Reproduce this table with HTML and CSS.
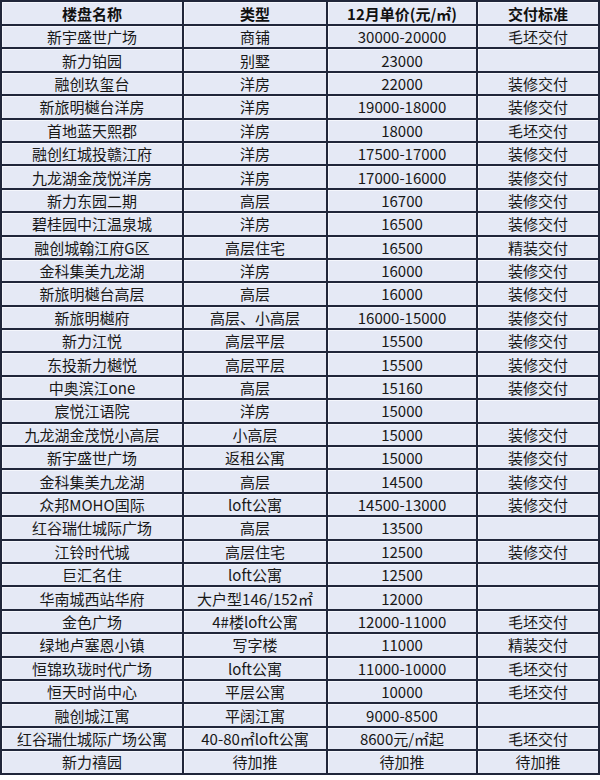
FILE: index.html
```html
<!DOCTYPE html>
<html lang="zh">
<head>
<meta charset="utf-8">
<link rel="stylesheet" href="styles.css">
</head>
<body>
<table class="price-table">
<colgroup>
<col class="c-name"><col class="c-type"><col class="c-price"><col class="c-std">
</colgroup>
<thead>
<tr><th>楼盘名称</th><th>类型</th><th>12月单价(元/㎡)</th><th>交付标准</th></tr>
</thead>
<tbody>
<tr><td>新宇盛世广场</td><td>商铺</td><td>30000-20000</td><td>毛坯交付</td></tr>
<tr><td>新力铂园</td><td>别墅</td><td>23000</td><td></td></tr>
<tr><td>融创玖玺台</td><td>洋房</td><td>22000</td><td>装修交付</td></tr>
<tr><td>新旅明樾台洋房</td><td>洋房</td><td>19000-18000</td><td>装修交付</td></tr>
<tr><td>首地蓝天熙郡</td><td>洋房</td><td>18000</td><td>毛坯交付</td></tr>
<tr><td>融创红城投赣江府</td><td>洋房</td><td>17500-17000</td><td>装修交付</td></tr>
<tr><td>九龙湖金茂悦洋房</td><td>洋房</td><td>17000-16000</td><td>装修交付</td></tr>
<tr><td>新力东园二期</td><td>高层</td><td>16700</td><td>装修交付</td></tr>
<tr><td>碧桂园中江温泉城</td><td>洋房</td><td>16500</td><td>装修交付</td></tr>
<tr><td>融创城翰江府G区</td><td>高层住宅</td><td>16500</td><td>精装交付</td></tr>
<tr><td>金科集美九龙湖</td><td>洋房</td><td>16000</td><td>装修交付</td></tr>
<tr><td>新旅明樾台高层</td><td>高层</td><td>16000</td><td>装修交付</td></tr>
<tr><td>新旅明樾府</td><td>高层、小高层</td><td>16000-15000</td><td>装修交付</td></tr>
<tr><td>新力江悦</td><td>高层平层</td><td>15500</td><td>装修交付</td></tr>
<tr><td>东投新力樾悦</td><td>高层平层</td><td>15500</td><td>装修交付</td></tr>
<tr><td>中奥滨江one</td><td>高层</td><td>15160</td><td>装修交付</td></tr>
<tr><td>宸悦江语院</td><td>洋房</td><td>15000</td><td></td></tr>
<tr><td>九龙湖金茂悦小高层</td><td>小高层</td><td>15000</td><td>装修交付</td></tr>
<tr><td>新宇盛世广场</td><td>返租公寓</td><td>15000</td><td>装修交付</td></tr>
<tr><td>金科集美九龙湖</td><td>高层</td><td>14500</td><td>装修交付</td></tr>
<tr><td>众邦MOHO国际</td><td>loft公寓</td><td>14500-13000</td><td>装修交付</td></tr>
<tr><td>红谷瑞仕城际广场</td><td>高层</td><td>13500</td><td></td></tr>
<tr><td>江铃时代城</td><td>高层住宅</td><td>12500</td><td>装修交付</td></tr>
<tr><td>巨汇名住</td><td>loft公寓</td><td>12500</td><td></td></tr>
<tr><td>华南城西站华府</td><td>大户型146/152㎡</td><td>12000</td><td></td></tr>
<tr><td>金色广场</td><td>4#楼loft公寓</td><td>12000-11000</td><td>毛坯交付</td></tr>
<tr><td>绿地卢塞恩小镇</td><td>写字楼</td><td>11000</td><td>精装交付</td></tr>
<tr><td>恒锦玖珑时代广场</td><td>loft公寓</td><td>11000-10000</td><td>毛坯交付</td></tr>
<tr><td>恒天时尚中心</td><td>平层公寓</td><td>10000</td><td>毛坯交付</td></tr>
<tr><td>融创城江寓</td><td>平阔江寓</td><td>9000-8500</td><td></td></tr>
<tr><td>红谷瑞仕城际广场公寓</td><td>40-80㎡loft公寓</td><td>8600元/㎡起</td><td>毛坯交付</td></tr>
<tr><td>新力禧园</td><td>待加推</td><td>待加推</td><td>待加推</td></tr>
</tbody>
</table>
</body>
</html>
```

FILE: styles.css
```css
html, body {
  margin: 0;
  padding: 0;
  background: #ffffff;
}

.price-table {
  border-collapse: collapse;
  table-layout: fixed;
  width: 598px;
  font-family: "Noto Sans CJK SC", "Liberation Sans", sans-serif;
  font-size: 15px;
  color: #181818;
  background: #e5e9f5;
}

.c-name { width: 182px; }
.c-type { width: 144px; }
.c-price { width: 150px; }
.c-std { width: 122px; }

.price-table th,
.price-table td {
  border: 2px solid #20263a;
  padding: 0;
  text-align: center;
  vertical-align: middle;
  line-height: 19px;
  white-space: nowrap;
  overflow: hidden;
  box-shadow: inset 1px 1px 0 #f4f6fc;
}

.price-table td {
  height: 21.4px;
}

.price-table th {
  height: 22px;
  font-weight: 700;
  font-size: 15px;
  color: #111;
}
```
